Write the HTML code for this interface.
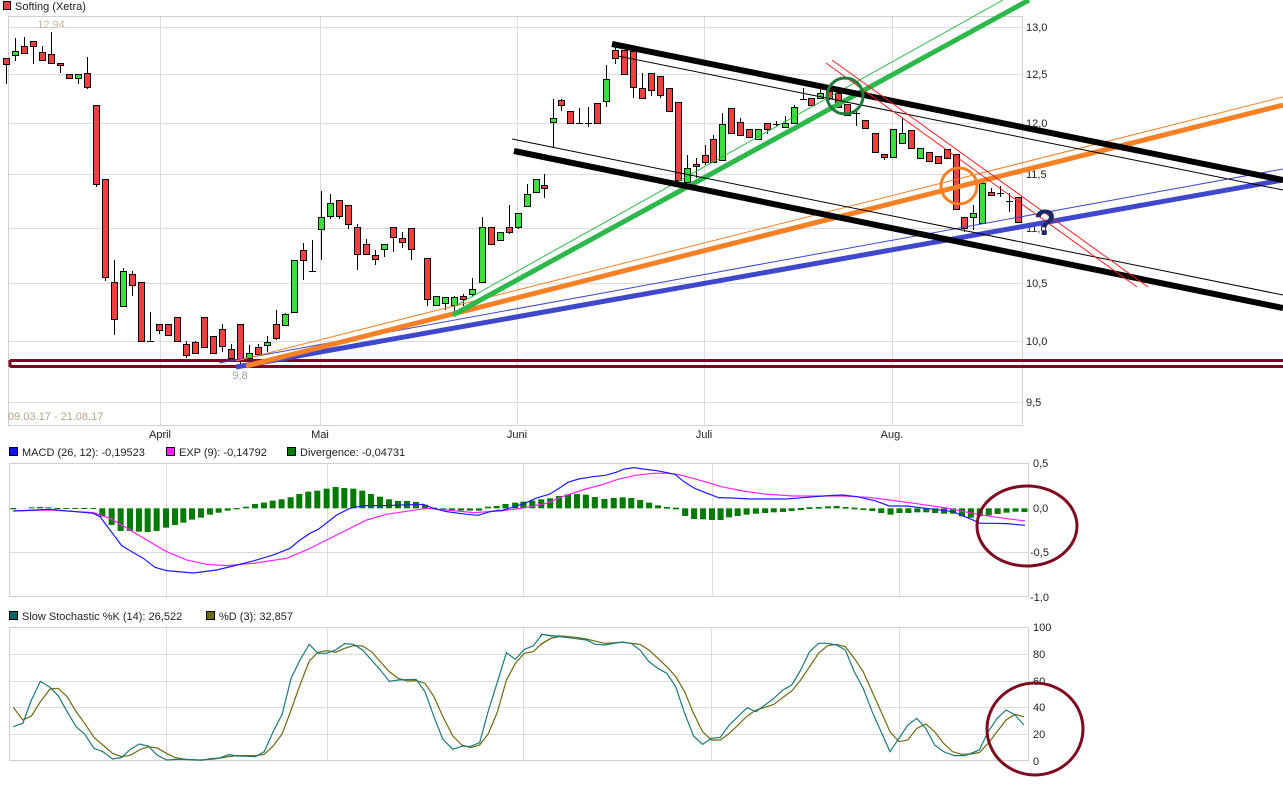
<!DOCTYPE html>
<html><head><meta charset="utf-8"><style>
html,body{margin:0;padding:0;background:#fff;}
svg{display:block;font-family:"Liberation Sans",sans-serif;}
</style></head><body>
<svg width="1283" height="787" viewBox="0 0 1283 787" xmlns="http://www.w3.org/2000/svg">
<!-- legend -->
<rect x="3.5" y="1.5" width="7" height="8" fill="#f04040" stroke="#000"/>
<text x="15" y="10" font-size="11" fill="#222">Softing (Xetra)</text>
<!-- main panel grid -->
<g stroke="#dcdcdc" stroke-width="1">
<line x1="8" y1="27.5" x2="1023" y2="27.5"/><line x1="8" y1="74.5" x2="1023" y2="74.5"/>
<line x1="8" y1="123.5" x2="1023" y2="123.5"/><line x1="8" y1="174.5" x2="1023" y2="174.5"/>
<line x1="8" y1="228.5" x2="1023" y2="228.5"/><line x1="8" y1="283.5" x2="1023" y2="283.5"/>
<line x1="8" y1="341.5" x2="1023" y2="341.5"/><line x1="8" y1="402.5" x2="1023" y2="402.5"/>
<line x1="160.5" y1="17" x2="160.5" y2="426"/><line x1="320.5" y1="17" x2="320.5" y2="426"/>
<line x1="517.5" y1="17" x2="517.5" y2="426"/><line x1="704.5" y1="17" x2="704.5" y2="426"/>
<line x1="892.5" y1="17" x2="892.5" y2="426"/>
</g>
<rect x="8.5" y="16.5" width="1014" height="409" fill="none" stroke="#d0d0d0"/>
<g font-size="11" fill="#222">
<text x="1026" y="31">13,0</text><text x="1026" y="78">12,5</text><text x="1026" y="127">12,0</text>
<text x="1026" y="178">11,5</text><text x="1026" y="232">11,0</text><text x="1026" y="287">10,5</text>
<text x="1026" y="345">10,0</text><text x="1026" y="406">9,5</text>
<text x="160" y="438" text-anchor="middle">April</text><text x="320" y="438" text-anchor="middle">Mai</text>
<text x="517" y="438" text-anchor="middle">Juni</text><text x="704" y="438" text-anchor="middle">Juli</text>
<text x="892" y="438" text-anchor="middle">Aug.</text>
</g>
<text x="8" y="420" font-size="11" fill="#b4a48c">09.03.17 - 21.08.17</text>
<text x="51" y="28" font-size="11" fill="#c8b6a0" text-anchor="middle">12,94</text>
<text x="240" y="379" font-size="11" fill="#9aa0b0" text-anchor="middle">9,8</text>

<!-- candles -->
<g id="c" stroke="#000" stroke-width="1">
<path fill="none" d="M6.5 58V84M15.5 38V61M24.5 37V53M33.5 41V64M42.5 46V60M51.5 32V64M60.5 63V73M69.5 74V78M78.5 74V84M87.5 57V89M96.5 105V187M105.5 179V281M114.5 260V335M123.5 268V306M132.5 271V296M141.5 282V341M150.5 312V341M159.5 324V334M168.5 324V335M177.5 317V341M186.5 341V358M195.5 341V353M204.5 317V347M213.5 336V353M222.5 324V352M231.5 344V362M240.5 324V366M249.5 345V360M258.5 344V356M267.5 336V352M276.5 310V340M285.5 313V325M294.5 260V312M303.5 243V280M312.5 240V271M321.5 191V260M330.5 194V219M339.5 200V219M348.5 205V229M357.5 224V270M366.5 239V254M375.5 250V265M384.5 244V257M393.5 227V252M402.5 232V248M411.5 228V260M427.5 258V306M436.5 296V305M445.5 297V310M454.5 296V311M463.5 294V306M472.5 278V297M482.5 217V282M491.5 227V244M500.5 232V240M509.5 205V234M518.5 213V229M527.5 184V206M536.5 179V192M544.5 174V198M553.5 99V148M561.5 99V111M570.5 111V123M579.5 108V123M588.5 107V127M597.5 103V123M606.5 65V107M615.5 45V64M624.5 50V74M633.5 51V98M642.5 73V99M651.5 73V96M660.5 76V98M669.5 88V111M678.5 102V183M687.5 155V183M696.5 158V178M705.5 145V165M713.5 135V162M722.5 113V160M731.5 108V133M740.5 118V135M749.5 129V137M758.5 129V139M767.5 123V134M776.5 121V127M785.5 116V127M794.5 105V123M803.5 88V99M811.5 98V105M820.5 88V98M829.5 87V100M838.5 93V107M847.5 104V115M856.5 110V126M865.5 120V128M875.5 133V152M884.5 154V160M893.5 129V157M902.5 118V143M911.5 130V148M920.5 148V158M929.5 152V161M938.5 156V163M947.5 149V158M956.5 154V209M964.5 217V232M973.5 205V230M982.5 183V223M991.5 188V195M1000.5 186V197M1009.5 193V212M1018.5 197V222"/>
<path fill="none" d="M147 341.5H154M309 271.5H316M576 123.5H583M585 123.5H592M773 124.5H780M800 99.5H807M853 113.5H860M997 193.5H1004M1006 201.5H1013"/>
<g fill="#f04040">
<rect x="3.5" y="58.5" width="6" height="6"/><rect x="21.5" y="46.5" width="6" height="7"/><rect x="30.5" y="41.5" width="6" height="5"/><rect x="39.5" y="52.5" width="6" height="8"/><rect x="48.5" y="54.5" width="6" height="9"/><rect x="57.5" y="63.5" width="6" height="2"/><rect x="66.5" y="74.5" width="6" height="4"/><rect x="84.5" y="73.5" width="6" height="14"/>
<rect x="93.5" y="105.5" width="6" height="79"/><rect x="102.5" y="179.5" width="6" height="98"/><rect x="111.5" y="282.5" width="6" height="37"/><rect x="129.5" y="274.5" width="6" height="11"/><rect x="138.5" y="282.5" width="6" height="59"/><rect x="156.5" y="324.5" width="6" height="6"/><rect x="165.5" y="324.5" width="6" height="11"/><rect x="174.5" y="317.5" width="6" height="24"/><rect x="183.5" y="344.5" width="6" height="11"/><rect x="192.5" y="342.5" width="6" height="11"/><rect x="201.5" y="317.5" width="6" height="30"/><rect x="210.5" y="336.5" width="6" height="17"/><rect x="219.5" y="329.5" width="6" height="17"/><rect x="228.5" y="349.5" width="6" height="9"/><rect x="237.5" y="324.5" width="6" height="36"/><rect x="255.5" y="347.5" width="6" height="7"/><rect x="273.5" y="324.5" width="6" height="14"/><rect x="300.5" y="250.5" width="6" height="10"/><rect x="336.5" y="200.5" width="6" height="16"/><rect x="345.5" y="205.5" width="6" height="19"/><rect x="354.5" y="227.5" width="6" height="27"/><rect x="363.5" y="244.5" width="6" height="10"/><rect x="372.5" y="255.5" width="6" height="4"/><rect x="390.5" y="227.5" width="6" height="10"/><rect x="399.5" y="238.5" width="6" height="4"/><rect x="408.5" y="228.5" width="6" height="21"/>
<rect x="424.5" y="258.5" width="6" height="41"/><rect x="460.5" y="296.5" width="6" height="3"/><rect x="488.5" y="227.5" width="6" height="17"/><rect x="506.5" y="227.5" width="6" height="5"/><rect x="541.5" y="185.5" width="6" height="3"/><rect x="558.5" y="100.5" width="6" height="5"/><rect x="567.5" y="111.5" width="6" height="12"/><rect x="594.5" y="103.5" width="6" height="20"/><rect x="612.5" y="50.5" width="6" height="8"/><rect x="621.5" y="50.5" width="6" height="24"/><rect x="630.5" y="51.5" width="6" height="36"/><rect x="639.5" y="88.5" width="6" height="10"/><rect x="648.5" y="73.5" width="6" height="17"/><rect x="657.5" y="76.5" width="6" height="19"/><rect x="666.5" y="88.5" width="6" height="23"/><rect x="675.5" y="102.5" width="6" height="78"/><rect x="693.5" y="164.5" width="6" height="2"/><rect x="702.5" y="155.5" width="6" height="7"/><rect x="710.5" y="139.5" width="6" height="23"/><rect x="728.5" y="108.5" width="6" height="25"/><rect x="737.5" y="122.5" width="6" height="13"/><rect x="746.5" y="129.5" width="6" height="8"/><rect x="764.5" y="123.5" width="6" height="6"/><rect x="808.5" y="98.5" width="6" height="7"/><rect x="826.5" y="91.5" width="6" height="7"/><rect x="835.5" y="93.5" width="6" height="14"/><rect x="844.5" y="104.5" width="6" height="11"/><rect x="862.5" y="120.5" width="6" height="8"/><rect x="872.5" y="133.5" width="6" height="19"/><rect x="881.5" y="154.5" width="6" height="3"/><rect x="908.5" y="130.5" width="6" height="18"/><rect x="926.5" y="152.5" width="6" height="9"/><rect x="935.5" y="156.5" width="6" height="7"/><rect x="944.5" y="149.5" width="6" height="9"/><rect x="953.5" y="154.5" width="6" height="55"/><rect x="961.5" y="217.5" width="6" height="11"/><rect x="988.5" y="192.5" width="6" height="3"/><rect x="1015.5" y="197.5" width="6" height="25"/>
</g>
<g fill="#3ce03c">
<rect x="12.5" y="51.5" width="6" height="4"/><rect x="75.5" y="74.5" width="6" height="4"/><rect x="120.5" y="271.5" width="6" height="35"/><rect x="246.5" y="353.5" width="6" height="5"/><rect x="264.5" y="342.5" width="6" height="3"/><rect x="282.5" y="314.5" width="6" height="11"/><rect x="291.5" y="260.5" width="6" height="52"/><rect x="318.5" y="217.5" width="6" height="12"/><rect x="327.5" y="203.5" width="6" height="13"/><rect x="381.5" y="244.5" width="6" height="5"/>
<rect x="433.5" y="296.5" width="6" height="9"/><rect x="442.5" y="297.5" width="6" height="6"/><rect x="451.5" y="297.5" width="6" height="8"/><rect x="469.5" y="289.5" width="6" height="5"/><rect x="479.5" y="227.5" width="6" height="55"/><rect x="497.5" y="232.5" width="6" height="8"/><rect x="515.5" y="213.5" width="6" height="14"/><rect x="524.5" y="194.5" width="6" height="12"/><rect x="533.5" y="179.5" width="6" height="13"/><rect x="550.5" y="118.5" width="6" height="4"/><rect x="603.5" y="79.5" width="6" height="22"/><rect x="684.5" y="168.5" width="6" height="14"/><rect x="719.5" y="124.5" width="6" height="36"/><rect x="755.5" y="129.5" width="6" height="10"/><rect x="782.5" y="123.5" width="6" height="4"/><rect x="791.5" y="107.5" width="6" height="16"/><rect x="817.5" y="93.5" width="6" height="5"/><rect x="890.5" y="129.5" width="6" height="28"/><rect x="899.5" y="133.5" width="6" height="10"/><rect x="917.5" y="148.5" width="6" height="10"/><rect x="970.5" y="213.5" width="6" height="4"/><rect x="979.5" y="183.5" width="6" height="40"/>
</g>
</g>

<!-- trendlines -->
<g fill="none" stroke-linecap="butt">
<path d="M10 360.5H1283M10 366.5H1283M10 360V367" stroke="#7d0a1e" stroke-width="3"/>
<line x1="219" y1="363" x2="1283" y2="169" stroke="#3f47cc" stroke-width="1"/>
<line x1="236" y1="367" x2="1283" y2="180" stroke="#3f47cc" stroke-width="5"/>
<line x1="236" y1="361" x2="1283" y2="97" stroke="#f58025" stroke-width="1"/>
<line x1="246" y1="366" x2="1283" y2="105" stroke="#f58025" stroke-width="5"/>
<line x1="455" y1="306" x2="1003" y2="0" stroke="#2db84a" stroke-width="1"/>
<line x1="453" y1="315" x2="1029" y2="0" stroke="#2db84a" stroke-width="5"/>
<line x1="618" y1="56" x2="1283" y2="190" stroke="#000" stroke-width="1"/>
<line x1="612" y1="44" x2="1283" y2="180" stroke="#000" stroke-width="6"/>
<line x1="512" y1="139" x2="1283" y2="295" stroke="#000" stroke-width="1"/>
<line x1="514" y1="151" x2="1283" y2="308" stroke="#000" stroke-width="6"/>
<line x1="826" y1="63" x2="1137" y2="287" stroke="#ee2020" stroke-width="1"/>
<line x1="832" y1="60" x2="1148" y2="287" stroke="#ee2020" stroke-width="1"/>
<circle cx="845" cy="96" r="18" stroke="#1e7b3c" stroke-width="3"/>
<circle cx="959" cy="186" r="18" stroke="#f58025" stroke-width="3"/>
</g>
<text x="1045" y="235" font-size="36" font-weight="bold" fill="#1c2a6b" text-anchor="middle">?</text>

<!-- MACD panel -->
<g font-size="11" fill="#222">
<rect x="9.5" y="447.5" width="8" height="8" fill="#1010ff" stroke="#000"/><text x="22" y="456">MACD (26, 12): -0,19523</text>
<rect x="166.5" y="447.5" width="8" height="8" fill="#ff20ff" stroke="#000"/><text x="179" y="456">EXP (9): -0,14792</text>
<rect x="287.5" y="447.5" width="8" height="8" fill="#007a00" stroke="#000"/><text x="300" y="456">Divergence: -0,04731</text>
<text x="1033" y="467">0,5</text><text x="1033" y="512">0,0</text><text x="1030" y="556">-0,5</text><text x="1030" y="601">-1,0</text>
</g>
<g stroke="#dcdcdc">
<line x1="9" y1="552.5" x2="1029" y2="552.5"/>
<line x1="166.5" y1="463" x2="166.5" y2="597"/><line x1="327.5" y1="463" x2="327.5" y2="597"/>
<line x1="523.5" y1="463" x2="523.5" y2="597"/><line x1="712.5" y1="463" x2="712.5" y2="597"/>
<line x1="899.5" y1="463" x2="899.5" y2="597"/>
</g>
<rect x="9.5" y="463.5" width="1019" height="133" fill="none" stroke="#d0d0d0"/>
<g transform="translate(0,380) scale(0.3333,0.3333)" fill="#007a00">
<rect x="31" y="384" width="18" height="4"/><rect x="86" y="382" width="18" height="3"/><rect x="111" y="381" width="18" height="4"/><rect x="136" y="382" width="18" height="3"/><rect x="163" y="384" width="18" height="3"/><rect x="190" y="384" width="18" height="3"/><rect x="217" y="384" width="18" height="3"/><rect x="244" y="384" width="18" height="3"/><rect x="271" y="384" width="18" height="3"/>
<rect x="298" y="385" width="18" height="25"/><rect x="326" y="385" width="18" height="50"/><rect x="353" y="385" width="18" height="68"/><rect x="381" y="385" width="18" height="68"/><rect x="408" y="385" width="18" height="70"/><rect x="434" y="385" width="18" height="71"/><rect x="461" y="385" width="18" height="68"/><rect x="489" y="385" width="18" height="58"/><rect x="516" y="385" width="18" height="50"/><rect x="541" y="385" width="18" height="43"/><rect x="567" y="385" width="18" height="34"/><rect x="594" y="385" width="18" height="28"/><rect x="621" y="385" width="18" height="19"/><rect x="647" y="385" width="18" height="13"/><rect x="674" y="385" width="18" height="7"/><rect x="701" y="384" width="18" height="4"/>
<rect x="729" y="380" width="18" height="5"/><rect x="756" y="372" width="18" height="13"/><rect x="783" y="368" width="18" height="17"/><rect x="809" y="362" width="18" height="23"/><rect x="836" y="358" width="18" height="27"/><rect x="863" y="352" width="18" height="33"/><rect x="889" y="342" width="18" height="43"/><rect x="916" y="335" width="18" height="50"/><rect x="943" y="332" width="18" height="53"/><rect x="971" y="326" width="18" height="59"/><rect x="998" y="321" width="18" height="64"/><rect x="1024" y="324" width="18" height="61"/><rect x="1051" y="326" width="18" height="59"/><rect x="1078" y="332" width="18" height="53"/><rect x="1104" y="342" width="18" height="43"/><rect x="1131" y="350" width="18" height="35"/><rect x="1158" y="358" width="18" height="27"/><rect x="1185" y="363" width="18" height="22"/><rect x="1212" y="363" width="18" height="22"/><rect x="1239" y="366" width="18" height="19"/><rect x="1266" y="374" width="18" height="11"/><rect x="1293" y="383" width="18" height="4"/><rect x="1321" y="385" width="18" height="4"/><rect x="1347" y="385" width="18" height="5"/><rect x="1374" y="385" width="18" height="7"/><rect x="1401" y="385" width="18" height="7"/><rect x="1428" y="385" width="18" height="7"/><rect x="1455" y="380" width="18" height="5"/><rect x="1481" y="378" width="18" height="7"/>
</g>
<g transform="translate(500,440) scale(0.35714,0.3333)" fill="#007a00">
<rect x="7" y="192" width="17" height="13"/><rect x="34" y="188" width="17" height="17"/><rect x="57" y="185" width="17" height="20"/><rect x="82" y="182" width="17" height="23"/><rect x="107" y="178" width="17" height="27"/><rect x="132" y="175" width="17" height="30"/><rect x="157" y="168" width="17" height="37"/><rect x="182" y="163" width="17" height="42"/><rect x="207" y="162" width="17" height="43"/><rect x="232" y="164" width="17" height="41"/><rect x="257" y="171" width="17" height="34"/><rect x="284" y="177" width="17" height="28"/><rect x="310" y="174" width="17" height="31"/><rect x="335" y="172" width="17" height="33"/><rect x="359" y="174" width="17" height="31"/><rect x="384" y="180" width="17" height="25"/><rect x="409" y="188" width="17" height="17"/><rect x="434" y="196" width="17" height="9"/><rect x="459" y="201" width="17" height="5"/><rect x="484" y="203" width="17" height="5"/>
<rect x="510" y="205" width="17" height="23"/><rect x="535" y="205" width="17" height="32"/><rect x="560" y="205" width="17" height="33"/><rect x="585" y="205" width="17" height="35"/><rect x="609" y="205" width="17" height="35"/><rect x="633" y="205" width="17" height="27"/><rect x="657" y="205" width="17" height="23"/><rect x="682" y="205" width="17" height="19"/><rect x="708" y="205" width="17" height="16"/><rect x="734" y="205" width="17" height="14"/><rect x="758" y="205" width="17" height="12"/><rect x="784" y="205" width="17" height="11"/><rect x="808" y="205" width="17" height="8"/><rect x="834" y="204" width="17" height="6"/><rect x="858" y="202" width="17" height="5"/><rect x="884" y="201" width="17" height="5"/><rect x="910" y="199" width="17" height="6"/><rect x="934" y="198" width="17" height="7"/><rect x="959" y="201" width="17" height="5"/><rect x="984" y="203" width="17" height="5"/><rect x="1009" y="205" width="17" height="5"/><rect x="1034" y="205" width="17" height="8"/><rect x="1059" y="205" width="17" height="14"/><rect x="1085" y="205" width="17" height="19"/><rect x="1110" y="205" width="17" height="14"/><rect x="1135" y="205" width="17" height="14"/><rect x="1160" y="205" width="17" height="12"/><rect x="1185" y="205" width="17" height="12"/><rect x="1210" y="205" width="17" height="14"/><rect x="1235" y="205" width="17" height="16"/><rect x="1260" y="205" width="17" height="16"/><rect x="1285" y="205" width="17" height="24"/><rect x="1310" y="205" width="17" height="28"/><rect x="1335" y="205" width="17" height="24"/><rect x="1360" y="205" width="17" height="21"/><rect x="1385" y="205" width="17" height="17"/><rect x="1410" y="205" width="17" height="13"/><rect x="1435" y="205" width="17" height="10"/><rect x="1460" y="205" width="17" height="11"/>
</g>
<g fill="none" stroke-width="1.2">
<g transform="translate(0,380) scale(0.3333,0.3333)">
<polyline vector-effect="non-scaling-stroke" stroke="#ff20ff" points="40,393 150,390 280,398 330,415 390,450 440,480 500,515 560,540 620,553 680,557 760,550 860,535 920,510 980,480 1040,450 1100,420 1160,403 1280,385 1340,390 1420,398 1500,393"/>
<polyline vector-effect="non-scaling-stroke" stroke="#1a1aff" points="40,393 150,388 280,400 300,410 330,450 365,497 400,518 430,535 465,562 500,572 580,579 650,570 700,558 760,543 820,525 870,505 900,480 930,460 955,448 985,425 1010,405 1050,385 1090,377 1150,377 1270,373 1300,385 1340,395 1400,403 1435,406 1470,395 1500,390"/>
</g>
<g transform="translate(500,440) scale(0.35714,0.3333)">
<polyline vector-effect="non-scaling-stroke" stroke="#ff20ff" points="0,213 60,205 130,190 180,168 240,147 290,133 330,118 380,106 430,100 470,100 500,104 540,115 580,127 620,140 680,153 740,162 820,168 900,168 960,168 1030,172 1090,180 1160,190 1250,204 1300,215 1360,227 1420,236 1470,243"/>
<polyline vector-effect="non-scaling-stroke" stroke="#1a1aff" points="0,213 40,200 70,190 100,175 140,162 165,145 190,127 220,117 260,110 295,106 325,97 345,88 375,83 400,87 440,92 490,103 515,125 545,145 580,160 612,173 650,174 700,177 800,177 860,172 920,167 960,165 1000,170 1050,182 1090,198 1140,198 1200,206 1270,215 1290,225 1320,238 1345,250 1380,250 1420,251 1470,256"/>
</g>
</g>
<ellipse cx="1027" cy="526" rx="50" ry="40" fill="none" stroke="#7d0a1e" stroke-width="3"/>

<!-- Stochastic panel -->
<g font-size="11" fill="#222">
<rect x="9.5" y="611.5" width="8" height="8" fill="#0e6464" stroke="#000"/><text x="22" y="620">Slow Stochastic %K (14): 26,522</text>
<rect x="206.5" y="611.5" width="8" height="8" fill="#6b6b10" stroke="#000"/><text x="219" y="620">%D (3): 32,857</text>
<text x="1033" y="631">100</text><text x="1033" y="658">80</text><text x="1033" y="685">60</text><text x="1033" y="711">40</text><text x="1033" y="738">20</text><text x="1033" y="765">0</text>
</g>
<g stroke="#dcdcdc">
<line x1="9" y1="654.5" x2="1029" y2="654.5"/><line x1="9" y1="681.5" x2="1029" y2="681.5"/><line x1="9" y1="707.5" x2="1029" y2="707.5"/><line x1="9" y1="734.5" x2="1029" y2="734.5"/>
<line x1="166.5" y1="627" x2="166.5" y2="761"/><line x1="327.5" y1="627" x2="327.5" y2="761"/><line x1="523.5" y1="627" x2="523.5" y2="761"/><line x1="711.5" y1="627" x2="711.5" y2="761"/><line x1="899.5" y1="627" x2="899.5" y2="761"/>
</g>
<rect x="9.5" y="627.5" width="1019" height="133" fill="none" stroke="#d0d0d0"/>
<g fill="none">
<g transform="translate(0,610) scale(0.35714,0.3333)">
<polyline vector-effect="non-scaling-stroke" stroke="#6b6b10" stroke-width="1.2" points="37,292 64,330 88,318 113,275 140,237 163,235 188,260 213,305 237,340 263,382 288,405 315,430 340,440 365,436 390,420 415,410 440,414 466,430 490,443 520,448 560,450 600,447 640,440 665,437 690,437 715,437 740,433 765,408 790,372 815,300 840,225 866,153 890,127 915,122 940,127 965,115 990,107 1015,108 1040,125 1065,155 1090,185 1115,205 1140,213 1165,212 1190,220 1215,260 1240,320 1268,378 1293,405 1318,413 1343,405 1368,370 1393,305 1418,210 1443,160 1468,130 1493,125 1518,100 1543,85 1568,78"/>
<polyline vector-effect="non-scaling-stroke" stroke="#1a7a7a" stroke-width="1.2" points="37,350 64,340 88,270 113,214 140,232 163,257 188,305 213,350 237,372 263,415 288,425 315,447 340,443 365,418 390,402 415,408 440,435 466,450 500,448 530,449 565,451 590,446 615,444 640,434 665,438 690,439 715,440 740,425 765,365 790,313 815,205 840,150 866,103 890,130 915,130 940,120 965,101 990,103 1015,120 1040,150 1065,180 1090,214 1115,210 1140,209 1165,208 1190,245 1215,320 1240,388 1268,418 1293,409 1318,409 1343,398 1368,300 1393,215 1418,128 1443,148 1468,118 1493,108 1518,73 1543,78 1568,78"/>
</g>
<g transform="translate(540,610) scale(0.35714,0.3333)">
<polyline vector-effect="non-scaling-stroke" stroke="#6b6b10" stroke-width="1.2" points="0,105 30,85 60,78 100,82 130,87 180,100 230,97 280,103 305,120 330,145 355,170 380,200 405,245 430,310 455,365 480,390 505,390 530,370 555,345 580,318 605,300 630,292 655,283 680,262 705,243 730,210 755,170 780,130 805,107 830,103 855,110 880,145 905,185 930,245 955,305 980,365 1005,395 1030,390 1055,355 1080,342 1105,365 1130,400 1155,425 1180,433 1205,432 1230,428 1255,400 1280,365 1305,330 1330,313 1355,320"/>
<polyline vector-effect="non-scaling-stroke" stroke="#1a7a7a" stroke-width="1.2" points="0,78 5,73 40,78 80,83 130,90 155,103 180,105 230,96 255,100 280,120 305,155 330,175 355,190 380,230 405,310 430,378 455,403 480,385 505,382 530,345 580,293 605,305 630,285 655,265 680,240 705,225 730,180 755,125 780,100 805,100 830,105 855,120 880,185 905,235 930,305 955,365 980,425 1005,385 1030,345 1055,325 1080,355 1105,405 1130,425 1160,437 1190,437 1230,420 1255,365 1280,325 1305,300 1330,315 1355,345"/>
</g>
</g>
<ellipse cx="1035" cy="729" rx="48" ry="46" fill="none" stroke="#7d0a1e" stroke-width="3"/>
</svg>
</body></html>
